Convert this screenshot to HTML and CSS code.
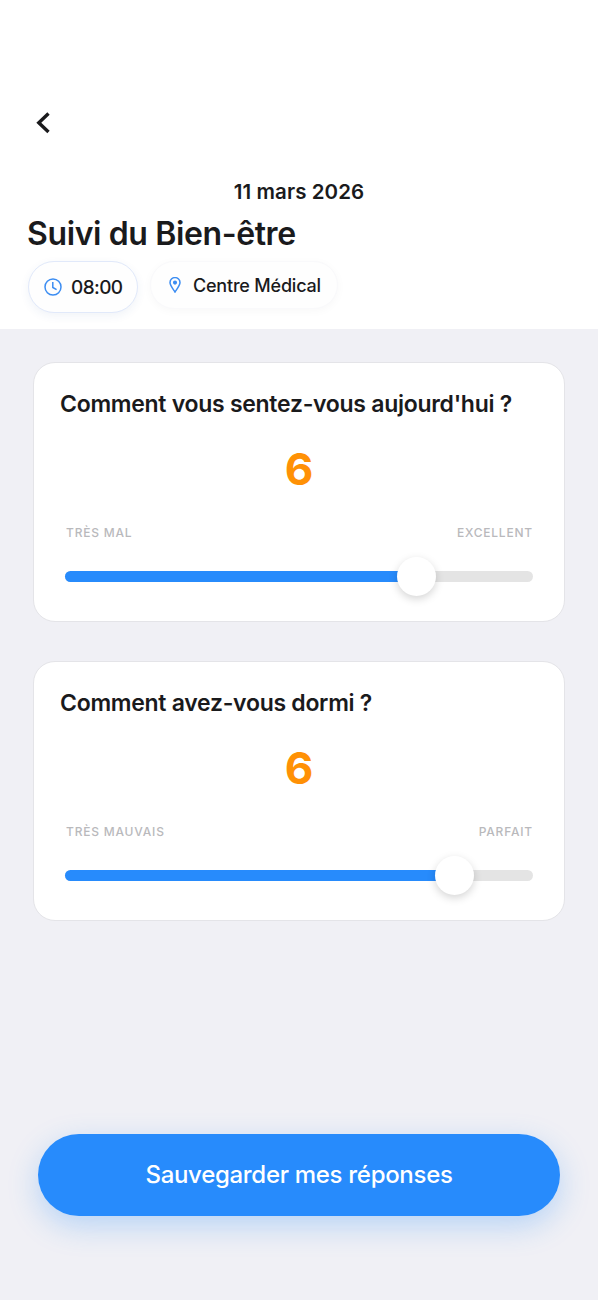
FILE: index.html
```html
<!DOCTYPE html>
<html lang="fr">
<head>
<meta charset="utf-8">
<title>Suivi du Bien-être</title>
<link rel="stylesheet" href="styles.css">
</head>
<body>
<header class="header">
  <button class="back" aria-label="Retour"><svg width="16" height="22" viewBox="0 0 16 22"><path d="M12.500 1.500 2.800 10.700l9.700 9.200" fill="none" stroke="#1a1a1c" stroke-width="3.400"/></svg></button>
  <p class="date"><span>11 mars 2026</span></p>
  <h1 class="title"><span>Suivi du Bien-être</span></h1>
  <div class="chips">
    <div class="chip time"><svg width="18" height="18" viewBox="0 0 18 18" fill="none" stroke="#3c8df2" stroke-width="1.5"><circle cx="9" cy="9" r="8"/><path d="M8.800 4v5.500l3.800 2.200"/></svg><span>08:00</span></div>
    <div class="chip place"><svg width="12" height="16" viewBox="0 0 12 16" fill="none" stroke="#3c8df2" stroke-width="1.5"><path d="M6 15C4 12 1 8.500 1 5.600a5 5 0 0 1 10 0C11 8.500 8 12 6 15z"/><circle cx="6" cy="5.600" r="1.300" fill="#3c8df2"/></svg><span>Centre Médical</span></div>
  </div>
</header>
<main class="content">
  <section class="card">
    <h2 class="question"><span>Comment vous sentez-vous aujourd'hui ?</span></h2>
    <div class="score">6</div>
    <div class="labels"><span>TRÈS MAL</span><span>EXCELLENT</span></div>
    <div class="slider"><div class="fill" style="width:75%"></div><div class="thumb" style="left:75%"></div></div>
  </section>
  <section class="card">
    <h2 class="question"><span>Comment avez-vous dormi ?</span></h2>
    <div class="score">6</div>
    <div class="labels"><span>TRÈS MAUVAIS</span><span>PARFAIT</span></div>
    <div class="slider"><div class="fill" style="width:83.3%"></div><div class="thumb" style="left:83.3%"></div></div>
  </section>
  <button class="save"><span>Sauvegarder mes réponses</span></button>
</main>
</body>
</html>
```
FILE: styles.css
```css
* { box-sizing: border-box; }
body { margin: 0; height: 1300px; background: #f0f0f5; color: #1a1a1c; font-family: Inter, "Liberation Sans", sans-serif; display: flex; flex-direction: column; }
h1, h2, p { margin: 0; }
button { border: 0; padding: 0; font-family: inherit; }
.header { height: 329px; background: #fff; padding: 112px 28px 0; flex: none; }
.back { display: block; width: 16px; height: 22px; margin-left: 8px; background: none; }
.back svg { display: block; }
.date { margin-top: 44px; height: 28px; line-height: 28px; text-align: center; font-size: 20.5px; font-weight: 600; letter-spacing: 0.08px; }
.title { margin: 8px 0 0 -1px; height: 40px; line-height: 40px; font-size: 32px; font-weight: 600; letter-spacing: -0.38px; }
.chips { display: flex; margin-top: 7px; gap: 12px; }
.chip { display: flex; align-items: center; background: #fefefe; font-weight: 500; }
.time { width: 110px; height: 52px; padding-left: 15px; gap: 9px; border: 1px solid #e1e9fa; border-radius: 26px; font-size: 19px; letter-spacing: -0.6px; box-shadow: 0 3px 10px rgba(40,80,160,.07); }
.place { width: 188px; height: 48px; padding-left: 18px; gap: 12px; border: 1px solid #f9f9fb; border-radius: 24px; font-size: 18px; letter-spacing: -0.2px; box-shadow: 0 2px 10px rgba(0,0,0,.03); }
.place span { padding-top: 1px; }
.content { flex: 1; padding: 33px 33px 0; display: flex; flex-direction: column; }
.card { height: 260px; margin-bottom: 39px; padding: 25px 31px 0 31px; background: #fff; border: 1px solid #e4e4e8; border-radius: 22px; }
.question { height: 32px; line-height: 32px; margin-left: -5px; font-size: 23px; font-weight: 600; letter-spacing: -0.28px; white-space: nowrap; }
.score { height: 54px; line-height: 54px; margin-top: 22px; text-align: center; color: #ff9105; font-size: 44px; font-weight: 700; }
.labels { display: flex; justify-content: space-between; height: 18px; line-height: 18px; margin: 28px 0 0 1px; color: #b9b9bc; font-size: 12px; font-weight: 500; letter-spacing: 0.8px; }
.slider { position: relative; height: 11px; margin-top: 29px; background: #e4e4e4; border-radius: 6px; }
.fill { height: 100%; background: #278bfc; border-radius: 6px 0 0 6px; }
.thumb { position: absolute; top: -14px; width: 39px; height: 39px; margin-left: -19.5px; background: #fff; border-radius: 50%; box-shadow: 0 3px 9px rgba(0,0,0,.17); }
.save { width: 522px; height: 82px; margin: 174px 0 0 5px; padding-bottom: 2px; border-radius: 41px; background: #278bfc; color: #fff; font-size: 24px; font-weight: 500; letter-spacing: -0.3px; box-shadow: 0 10px 30px rgba(39,139,252,.28); }
```
